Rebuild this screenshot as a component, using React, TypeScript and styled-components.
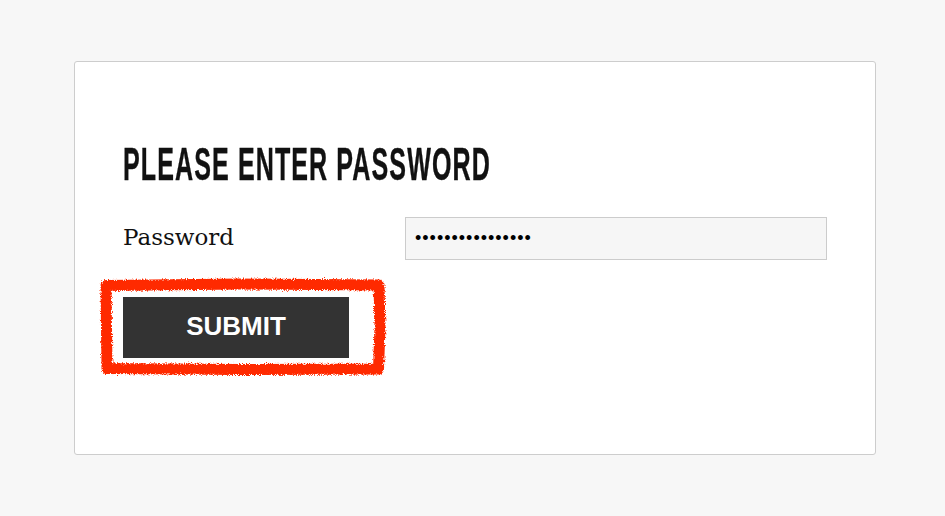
import React from "react";
import styled, { createGlobalStyle } from "styled-components";

const Global = createGlobalStyle`
  html, body { margin: 0; padding: 0; background: #f7f7f7; }
  * { box-sizing: border-box; }
`;

const Page = styled.div`
  padding: 61px 0 0 74px;
  min-height: 516px;
  background: #f7f7f7;
`;

const Card = styled.div`
  width: 802px;
  background: #fff;
  border: 1px solid #cdcdcd;
  border-radius: 3px;
  padding: 79px 48px 96px 48px;
  display: flex;
  flex-direction: column;
`;

const Title = styled.h1`
  margin: 0;
  height: 46px;
  font-family: "Liberation Sans", Arial, sans-serif;
  font-weight: 700;
  font-size: 46px;
  line-height: 46px;
  letter-spacing: 2px;
  color: #111;
  white-space: nowrap;
  -webkit-text-stroke: 0.4px #111;
  transform-origin: left center;
  transform: scaleX(0.545);
`;

const Row = styled.div`
  margin-top: 30px;
  display: grid;
  grid-template-columns: 282px 1fr;
  align-items: center;
`;

const Label = styled.label`
  font-family: "DejaVu Serif", "Liberation Serif", serif;
  font-size: 23px;
  color: #111;
  margin-top: -4px;
`;

const Field = styled.input`
  height: 43px;
  width: 100%;
  border: 1px solid #cccccc;
  background: #f6f6f6;
  padding: 0 9px;
  font-family: "Liberation Sans", Arial, sans-serif;
  font-size: 18px;
  letter-spacing: 1px;
  color: #000;
  outline: none;
  border-radius: 0;
`;

const ButtonWrap = styled.div`
  margin-top: 37px;
  position: relative;
  width: 226px;
`;

const Submit = styled.button`
  display: block;
  width: 226px;
  height: 61px;
  background: #333333;
  border: none;
  border-radius: 0;
  color: #fff;
  font-family: "Liberation Sans", Arial, sans-serif;
  font-weight: 700;
  font-size: 26px;
  padding: 0 0 2px 0;
  cursor: pointer;
`;

const Mark = styled.svg`
  position: absolute;
  left: -23px;
  top: -18px;
  width: 286px;
  height: 97px;
  pointer-events: none;
  overflow: visible;
`;

export default function App() {
  return (
    <>
      <Global />
      <Page>
        <Card>
          <Title>PLEASE ENTER PASSWORD</Title>
          <Row>
            <Label htmlFor="pw">Password</Label>
            <Field id="pw" type="password" defaultValue="xxxxxxxxxxxxxxxx" />
          </Row>
          <ButtonWrap>
            <Submit>SUBMIT</Submit>
            <Mark viewBox="0 0 286 97">
              <defs>
                <filter id="rough" x="-10%" y="-10%" width="120%" height="120%">
                  <feTurbulence type="fractalNoise" baseFrequency="1.1" numOctaves="3" seed="5" result="n" />
                  <feDisplacementMap in="SourceGraphic" in2="n" scale="5" xChannelSelector="R" yChannelSelector="G" />
                </filter>
              </defs>
              <g filter="url(#rough)" fill="none" stroke="#ff2a00" strokeWidth="11" strokeLinejoin="round">
                <path d="M6 6.5 L140 5 L279 6 L280 48 L278.5 90 L140 90.5 L7 89.5 L6.5 48 Z" />
              </g>
            </Mark>
          </ButtonWrap>
        </Card>
      </Page>
    </>
  );
}
